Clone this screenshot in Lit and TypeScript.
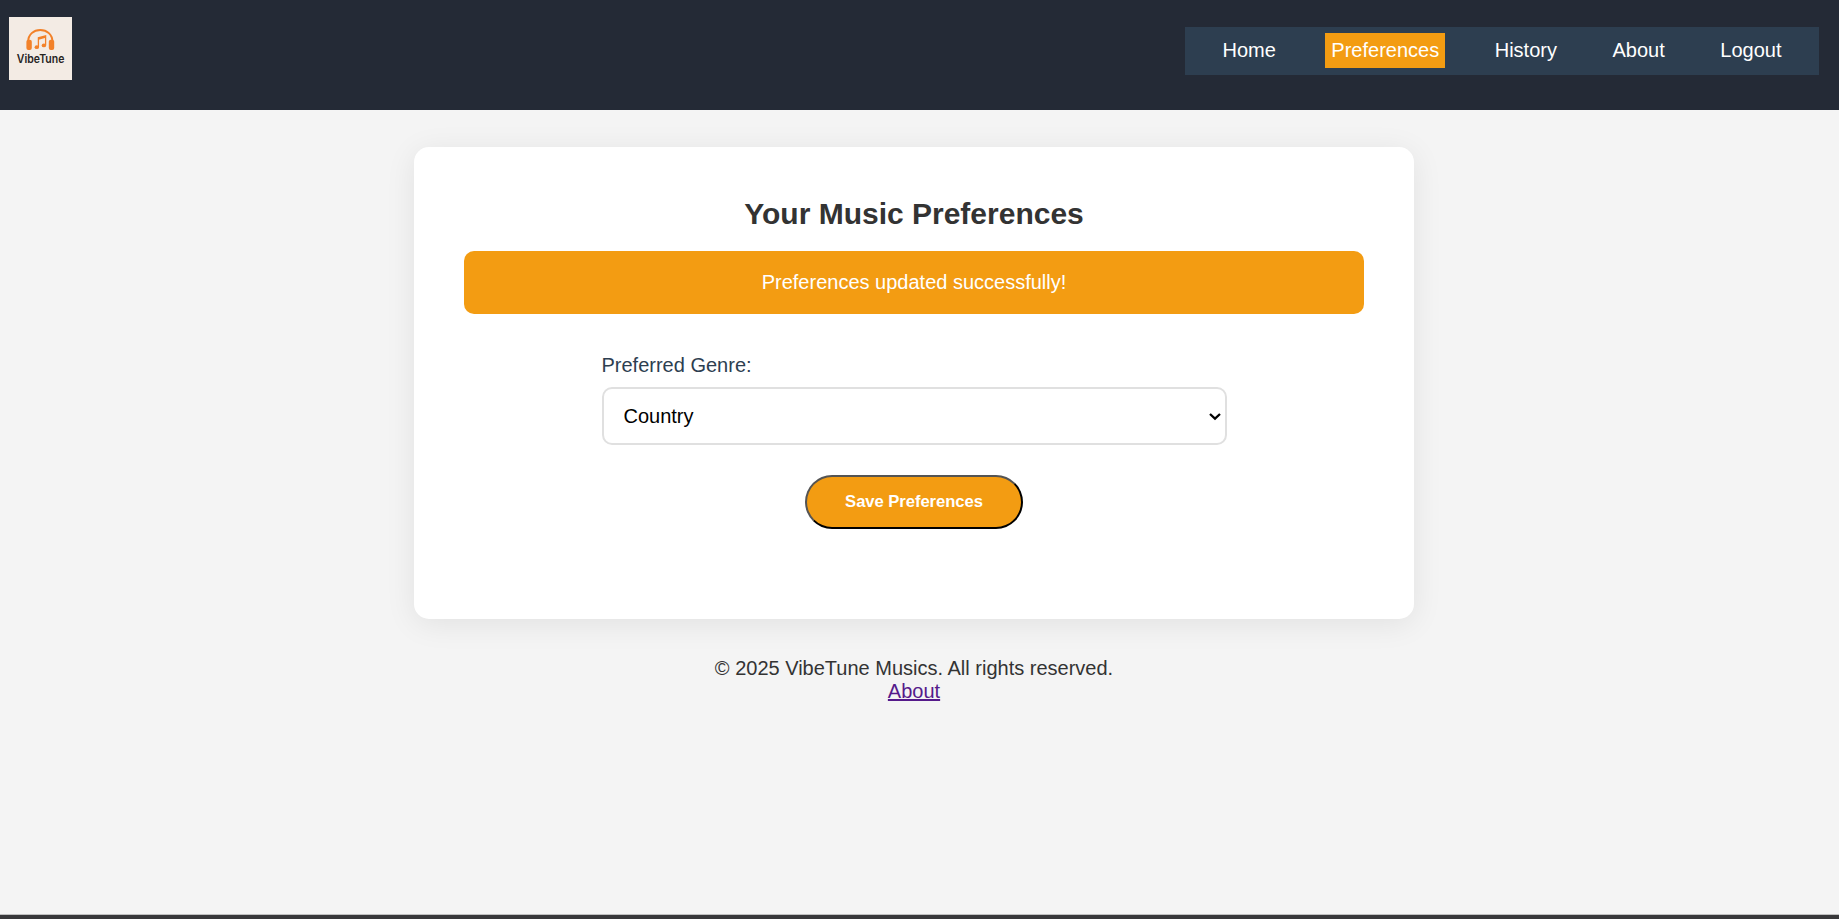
import { LitElement, html, css } from "lit";
import { customElement, state } from "lit/decorators.js";

const LINKS = ["Home", "Preferences", "History", "About", "Logout"];
const GENRES = ["Country", "Pop", "Rock", "Jazz", "Classical"];

@customElement("vibe-logo")
class VibeLogo extends LitElement {
  static styles = css`
    :host { display: block; width: 63px; height: 63px; }
    svg { display: block; }
    .word { font: 600 11.5px Inter, "Liberation Sans", sans-serif; fill: #26231f; }
  `;
  render() {
    return html`<svg width="63" height="63" viewBox="0 0 63 63">
      <rect width="63" height="63" fill="#f3ebe4" />
      <g fill="none" stroke="#f28129">
        <path d="M19.2 24.5C19.2 17.5 24.6 13 31.3 13S43.4 17.5 43.4 24.5" stroke-width="2" />
        <path d="M29.4 30V20.8L36.6 18.8V28.2" stroke-width="1.3" />
        <path d="M29.4 21.9L36.6 19.9" stroke-width="2" />
      </g>
      <g fill="#f28129">
        <rect x="17.4" y="22.8" width="5.4" height="10.2" rx="2" />
        <rect x="39.8" y="22.8" width="5.4" height="10.2" rx="2" />
        <ellipse cx="27.8" cy="30.2" rx="2.2" ry="1.9" />
        <ellipse cx="34.9" cy="28.4" rx="2.2" ry="1.9" />
      </g>
      <text class="word" x="31.6" y="45.6" text-anchor="middle" textLength="47.5" lengthAdjust="spacingAndGlyphs">VibeTune</text>
    </svg>`;
  }
}

@customElement("app-root")
class AppRoot extends LitElement {
  @state() genre = "Country";

  static styles = css`
    :host {
      display: flex;
      flex-direction: column;
      height: 919px;
      box-sizing: border-box;
      overflow: hidden;
      background: #f4f4f4;
      color: #333;
      font: 20px/23px "Liberation Sans", Arial, sans-serif;
    }
    .header {
      display: flex;
      justify-content: space-between;
      align-items: flex-start;
      box-sizing: border-box;
      height: 110px;
      padding: 17px 20px 0 9px;
      background: #242a36;
    }
    .nav {
      display: flex;
      gap: 43.05px;
      box-sizing: border-box;
      height: 48px;
      margin-top: 10px;
      padding: 6px 31.25px;
      background: #2d3e50;
    }
    .link {
      height: 23px;
      padding: 6px 6.25px;
      color: #fff;
      text-decoration: none;
    }
    .active { background: #f39c12; }
    .main {
      display: flex;
      flex-direction: column;
      align-items: center;
      flex: 1;
      padding: 37px 11px 0 0;
    }
    .card {
      display: flex;
      flex-direction: column;
      align-items: center;
      box-sizing: border-box;
      width: 1000px;
      height: 472px;
      padding: 50px;
      background: #fff;
      border-radius: 15px;
      box-shadow: 0 5px 31px rgba(0, 0, 0, 0.08);
    }
    .title { margin: 0; font-size: 30px; line-height: 34px; }
    .alert {
      box-sizing: border-box;
      width: 100%;
      height: 63px;
      margin-top: 20px;
      padding: 20px;
      border-radius: 10px;
      background: #f39c12;
      color: #fff;
      text-align: center;
    }
    .form {
      display: flex;
      flex-direction: column;
      width: 625px;
      margin-top: 40px;
    }
    .label { color: #2d3e50; }
    .field { position: relative; display: flex; margin-top: 10px; }
    .select {
      appearance: none;
      box-sizing: border-box;
      width: 100%;
      height: 58px;
      padding: 0 20px;
      border: 2px solid #e0e0e0;
      border-radius: 10px;
      background: #fff;
      color: #000;
      font: inherit;
    }
    .chevron { position: absolute; right: 6px; top: 25px; pointer-events: none; }
    .save {
      align-self: center;
      box-sizing: border-box;
      width: 218px;
      height: 54px;
      margin-top: 30px;
      padding: 0;
      border: 2px outset #000;
      border-radius: 31px;
      background: #f39c12;
      color: #fff;
      font: bold 16.67px "Liberation Sans", Arial, sans-serif;
      letter-spacing: -0.07px;
    }
    .footer { margin-top: 38px; text-align: center; }
    .about { color: #551a8b; }
    .bar { height: 4px; border-top: 1px solid #bfbfbf; background: #38383a; }
  `;

  render() {
    return html`
      <header class="header">
        <vibe-logo></vibe-logo>
        <nav class="nav">
          ${LINKS.map((name) => html`<a class="link ${name === "Preferences" ? "active" : ""}" href="#">${name}</a>`)}
        </nav>
      </header>
      <main class="main">
        <section class="card">
          <h2 class="title">Your Music Preferences</h2>
          <div class="alert">Preferences updated successfully!</div>
          <div class="form">
            <label class="label" for="genre">Preferred Genre:</label>
            <div class="field">
              <select class="select" id="genre" .value=${this.genre}
                @change=${(e: Event) => (this.genre = (e.target as HTMLSelectElement).value)}>
                ${GENRES.map((g) => html`<option>${g}</option>`)}
              </select>
              <svg class="chevron" width="12" height="9" viewBox="0 0 12 9">
                <path d="M1 2L6 6.7L11 2" fill="none" stroke="#000" stroke-width="2.3" />
              </svg>
            </div>
            <button class="save">Save Preferences</button>
          </div>
        </section>
        <footer class="footer">
          <div>© 2025 VibeTune Musics. All rights reserved.</div>
          <a class="about" href="#">About</a>
        </footer>
      </main>
      <div class="bar"></div>
    `;
  }
}
